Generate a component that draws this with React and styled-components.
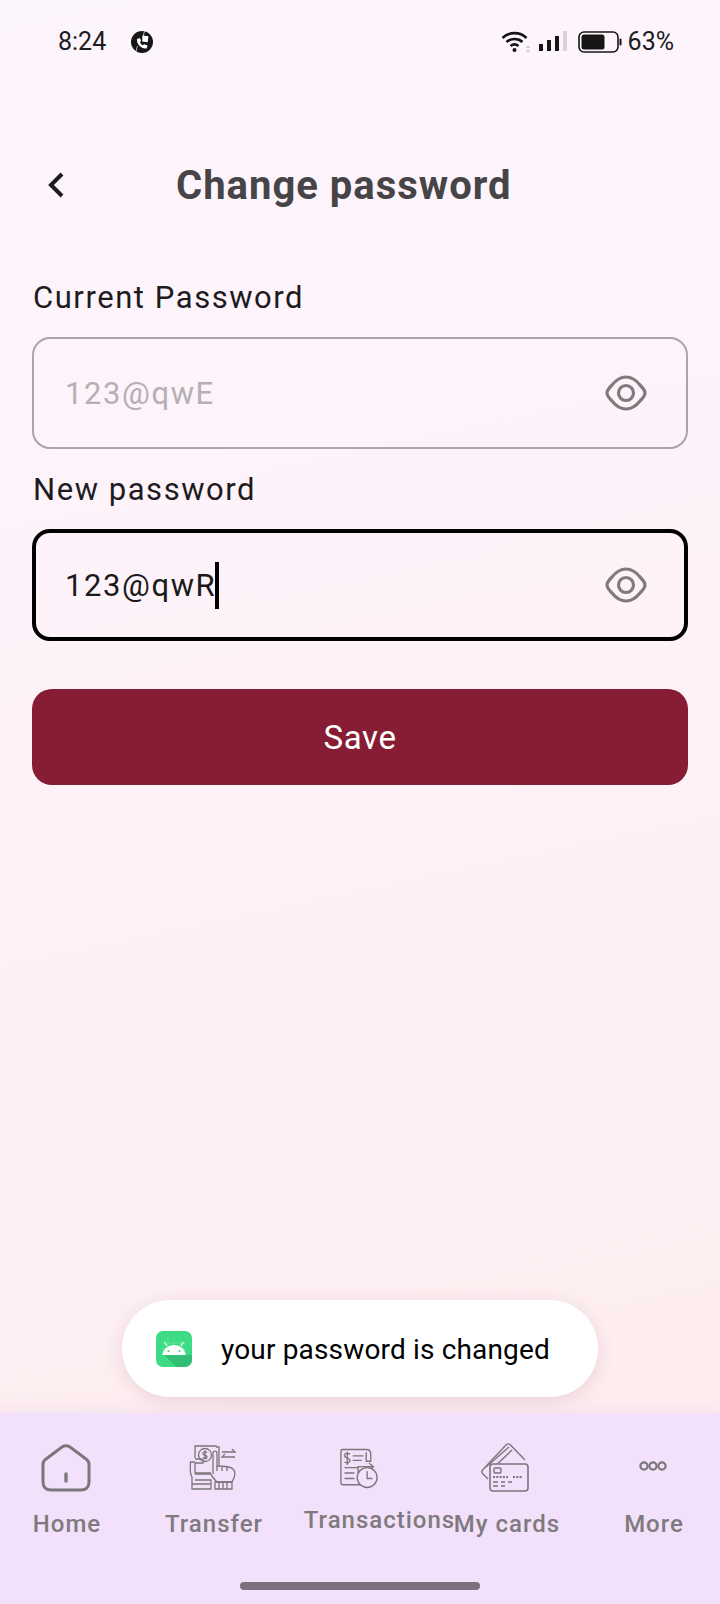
import React from 'react';
import styled, { createGlobalStyle } from 'styled-components';

const GlobalStyle = createGlobalStyle`
	html, body {
		margin: 0;
		padding: 0;
		background: #fdf2f6;
	}
	* {
		box-sizing: border-box;
	}
`;

const Screen = styled.div`
	position: relative;
	display: flex;
	flex-direction: column;
	width: 720px;
	height: 1604px;
	overflow: hidden;
	font-family: Roboto, 'Liberation Sans', sans-serif;
	background: linear-gradient(168deg, #fdf5fd 0%, #fef2f8 45%, #fdeced 100%);
`;

const StatusBar = styled.div`
	display: flex;
	align-items: center;
	justify-content: space-between;
	height: 83px;
	padding: 0 46px 0 58px;
	color: #1c1b1f;
	font-size: 25px;
	flex-shrink: 0;
`;

const StatusGroup = styled.div`
	display: flex;
	align-items: center;
	gap: ${(props) => props.gap || 0}px;
	margin-left: ${(props) => props.offset || 0}px;
`;

const Header = styled.div`
	display: flex;
	align-items: center;
	height: 70px;
	margin-top: 67px;
	padding-left: 46px;
`;

const Title = styled.h1`
	margin: 0 0 0 110px;
	color: #464446;
	font-size: 40px;
	font-weight: 700;
	letter-spacing: 1px;
`;

const Form = styled.div`
	display: flex;
	flex-direction: column;
	padding: 0 32px;
	margin-top: 60px;
`;

const Label = styled.label`
	display: block;
	height: 34px;
	line-height: 34px;
	padding-top: 1px;
	margin: ${(props) => (props.second ? '23px' : '0')} 0 23px 1px;
	color: #1d1b20;
	font-size: 31px;
	letter-spacing: 1.55px;
`;

const Field = styled.div`
	display: flex;
	align-items: center;
	justify-content: space-between;
	height: 112px;
	padding: 0 ${(props) => (props.focused ? '37px' : '39px')} 0 ${(props) => (props.focused ? '29px' : '31px')};
	border: ${(props) => (props.focused ? '4px solid #000' : '2px solid #aca4a8')};
	border-radius: 18px;
`;

const FieldText = styled.span`
	display: flex;
	align-items: center;
	color: ${(props) => (props.muted ? '#b5b0b2' : '#1a1a1a')};
	font-size: 31px;
	letter-spacing: 1.6px;
`;

const Caret = styled.span`
	display: inline-block;
	width: 4px;
	height: 47px;
	margin-left: -1px;
	background: #000;
`;

const SaveButton = styled.button`
	height: 96px;
	margin-top: 48px;
	border: none;
	border-radius: 20px;
	background: #861d34;
	color: #fff;
	font-family: inherit;
	font-size: 33px;
	letter-spacing: 0.6px;
`;

const Toast = styled.div`
	position: absolute;
	left: 122px;
	top: 1300px;
	display: flex;
	align-items: center;
	gap: 29px;
	width: 476px;
	height: 97px;
	padding-left: 34px;
	border-radius: 48px;
	background: #fff;
	box-shadow: 0 4px 18px rgba(120, 60, 80, 0.14);
	color: #000;
	font-size: 28px;
	letter-spacing: 0.16px;
	white-space: nowrap;
`;

const ToastText = styled.span`
	margin-top: 2px;
`;

const BottomNav = styled.nav`
	position: relative;
	display: grid;
	grid-template-columns: 132px 162px 130px 164px 130px;
	margin-top: auto;
	height: 191px;
	padding-top: 28px;
	background: #f3e0fb;
	box-shadow: 0 -6px 14px rgba(200, 170, 220, 0.12);
`;

const NavItem = styled.div`
	display: flex;
	flex-direction: column;
	align-items: center;
	color: #7f7a7d;
`;

const NavIcon = styled.div`
	display: flex;
	align-items: center;
	justify-content: center;
	height: 54px;
`;

const NavLabel = styled.span`
	margin-top: ${(props) => (props.raised ? '10px' : '14px')};
	margin-left: ${(props) => (props.raised ? '41px' : '2px')};
	font-size: 24px;
	font-weight: 500;
	letter-spacing: 1px;
	line-height: 30px;
	white-space: nowrap;
`;

const HomeBar = styled.div`
	position: absolute;
	left: 240px;
	bottom: 14px;
	width: 240px;
	height: 8px;
	border-radius: 4px;
	background: #7b6f7c;
`;

const BackIcon = () => (
	<svg width='20' height='28' viewBox='0 0 20 28' fill='none' stroke='#1d1b20' strokeWidth='4'>
		<polyline points='16 3 5 14 16 25' />
	</svg>
);

const AppStatusIcon = () => (
	<svg width='24' height='24' viewBox='0 0 24 24'>
		<circle cx='12' cy='12' r='11' fill='#161616' />
		<path d='M7 9 l3 -1 l1 3 l-1 1.200 c.6 1.400 1.400 2.400 2.800 3 l1.400 -1 l3.400 1.400 l-1 2.800 c-5 .8 -10.400 -4.400 -9.600 -9.400z' fill='#fff' />
		<path d='M12.500 5.500 l6 .8 l-.8 6 l-5.500 -.8z' fill='#fff' />
		<path d='M14.500 1 l-1.500 6 M7.500 16 l-2 7' stroke='#fff' strokeWidth='.7' />
	</svg>
);

const WifiIcon = () => (
	<svg width='30' height='24' viewBox='0 0 30 24' fill='none' stroke='#141414' strokeWidth='2.6'>
		<path d='M1.500 8 C8 1.500 19 1.500 25.500 8' />
		<path d='M5.500 12 C10 8 17 8 21.500 12' />
		<path d='M9.500 16 C12 14 15 14 17.500 16' />
		<circle cx='13.500' cy='20' r='2' fill='#141414' stroke='none' />
		<path d='M27 15 l2.600 3 h-5.200z M27 23 l2.600 -3 h-5.200z' fill='#d5d0d4' stroke='none' />
	</svg>
);

const SignalIcon = () => (
	<svg width='30' height='22' viewBox='0 0 30 22'>
		<rect x='1' y='13' width='4' height='7' fill='#161616' />
		<rect x='9' y='9' width='4' height='11' fill='#161616' />
		<rect x='17' y='5' width='4' height='15' fill='#161616' />
		<rect x='25' y='0' width='4' height='20' fill='#d8d3d8' />
	</svg>
);

const BatteryIcon = () => (
	<svg width='44' height='22' viewBox='0 0 44 22'>
		<rect x='1' y='1' width='39' height='20' rx='5' fill='none' stroke='#141414' strokeWidth='1.6' />
		<rect x='3.500' y='3.500' width='23' height='15' rx='2.500' fill='#161616' />
		<rect x='41.500' y='7.500' width='2' height='7' rx='1' fill='#141414' />
	</svg>
);

const EyeIcon = () => (
	<svg width='42' height='36' viewBox='0 0 42 36' fill='none' stroke='#82797c' strokeWidth='3.2'>
		<path d='M2 18 C2 16 4 13 7 10 C11 5 16 2 21 2 C26 2 31 5 35 10 C38 13 40 16 40 18 C40 20 38 23 35 26 C31 31 26 34 21 34 C16 34 11 31 7 26 C4 23 2 20 2 18z' />
		<circle cx='21' cy='18' r='7.500' />
	</svg>
);

const AndroidIcon = () => (
	<svg width='36' height='36' viewBox='0 0 36 36'>
		<rect width='36' height='36' rx='7' fill='#3ddc84' />
		<path d='M6 12 H30 M6 18 H30 M6 24 H30 M12 6 V30 M18 6 V30 M24 6 V30' stroke='#6fe6a6' strokeWidth='.6' />
		<path d='M8 24 L20 36 H29 a7 7 0 0 0 7 -7 V24z' fill='#27a866' opacity='.55' />
		<path d='M6.500 24 a11.500 10 0 0 1 23 0z' fill='#fff' />
		<path d='M11 15 l-2.500 -4 M25 15 l2.500 -4' stroke='#fff' strokeWidth='1.200' />
		<circle cx='12.500' cy='20' r='1.100' fill='#3ddc84' />
		<circle cx='23.500' cy='20' r='1.100' fill='#3ddc84' />
	</svg>
);

const HomeIcon = () => (
	<svg width='50' height='48' viewBox='0 0 50 48' fill='none' stroke='#7b7679' strokeWidth='3'>
		<path d='M2 20 C2 18 3 16.500 5 15 L21 3 C23.500 1.500 26.500 1.500 29 3 L45 15 C47 16.500 48 18 48 20 V38 C48 43 45 46 40 46 H10 C5 46 2 43 2 38z' />
		<path d='M25 30 V37' strokeLinecap='round' strokeWidth='3.400' />
	</svg>
);

const TransferIcon = () => (
	<svg width='48' height='48' viewBox='0 0 48 48' fill='none' stroke='#7b7679' strokeWidth='1.300'>
		<path d='M6 14 V2 H27 V3 M27 3 H30 V22' />
		<circle cx='16' cy='11' r='6.500' />
		<path d='M18 8.500 C16 7 13.800 8 14 10 C14.500 11.500 18 11 18 13 C18 14.800 15.500 15 14 13.500 M16 6.500 V15.500' />
		<path d='M33 8 H46 L43 5 M46 13 H33 L36 10' />
		<path d='M6 15 H12 C14 15 15 17 14 19 H6 V29 H22' />
		<path d='M6 18 H1.500 C1 24 1 30 3 33 V45 H22 V36 H6' />
		<path d='M6 30 H22 M3 40 H22' />
		<path d='M24 30 V9 C24 6.500 28 6.500 28 9 V22 C33 22 41 22 44 25 C47 28 46 33 43 38 H28 C26 36 23 33 22 30' fill='#f3e0fb' />
		<path d='M33 22 V27 M38 22.500 V27 M28 22 V27' />
		<path d='M26 38 H43 V45 H26z M30 38 V45 M34 38 V45 M38 38 V45' />
	</svg>
);

const TransactionsIcon = () => (
	<svg width='38' height='41' viewBox='0 0 42 44' fill='none' stroke='#7b7679' strokeWidth='1.500'>
		<path d='M24 40 H3 C2 40 1 39 1 38 V3 C1 2 2 1 3 1 H29 C32 1 34 3 34 6 V14 H29 V4' />
		<path d='M11 6 C8 4.500 5 5 5 8 C5 11 11 10 11 13 C11 16 8 16.500 5 15 M8 3.500 V18' />
		<path d='M14 8 H26 M14 13 H24 M5 21 H20 M5 27 H16 M5 33 H16' />
		<path d='M20 27 V20 H36 M32 16 L37 20 L32 24' />
		<circle cx='30' cy='32' r='11' fill='#f3e0fb' />
		<path d='M30 25 V33 H36' />
	</svg>
);

const CardsIcon = () => (
	<svg width='50' height='50' viewBox='0 0 50 50' fill='none' stroke='#7b7679' strokeWidth='1.400'>
		<path d='M7 36 L2 31 C0.500 29.500 0.500 28 2 26.500 L25 2 C26.500 0.500 28 0.500 29.500 2 L44 17' />
		<path d='M5 24 L28 4 M9 28 L31 7' />
		<rect x='9' y='21' width='38' height='27' rx='3' strokeWidth='1.600' fill='#f3e0fb' />
		<rect x='13' y='25' width='7' height='5' rx='1' />
		<path d='M12 34 H27 M32 34 H42' strokeDasharray='2 1.300' strokeWidth='1.800' />
		<path d='M12 39 H17 M20 39 H24 M27 39 H31 M12 43 H17 M20 43 H24' />
	</svg>
);

const MoreIcon = () => (
	<svg width='28' height='16' viewBox='0 0 28 16' fill='none' stroke='#7b7679' strokeWidth='2.200'>
		<circle cx='5' cy='6' r='3.600' />
		<circle cx='14' cy='6' r='3.600' />
		<circle cx='23' cy='6' r='3.600' />
	</svg>
);

const navItems = [
	{ label: 'Home', Icon: HomeIcon },
	{ label: 'Transfer', Icon: TransferIcon },
	{ label: 'Transactions', Icon: TransactionsIcon, raised: true },
	{ label: 'My cards', Icon: CardsIcon },
	{ label: 'More', Icon: MoreIcon },
];

export default function App() {
	return (
		<Screen>
			<GlobalStyle />
			<StatusBar>
				<StatusGroup gap={24}>
					<span>8:24</span>
					<AppStatusIcon />
				</StatusGroup>
				<StatusGroup gap={7}>
					<WifiIcon />
					<SignalIcon />
					<StatusGroup gap={6} offset={3}>
						<BatteryIcon />
						<span>63%</span>
					</StatusGroup>
				</StatusGroup>
			</StatusBar>
			<Header>
				<BackIcon />
				<Title>Change password</Title>
			</Header>
			<Form>
				<Label>Current Password</Label>
				<Field>
					<FieldText muted>123@qwE</FieldText>
					<EyeIcon />
				</Field>
				<Label second>New password</Label>
				<Field focused>
					<FieldText>
						123@qwR
						<Caret />
					</FieldText>
					<EyeIcon />
				</Field>
				<SaveButton>Save</SaveButton>
			</Form>
			<Toast>
				<AndroidIcon />
				<ToastText>your password is changed</ToastText>
			</Toast>
			<BottomNav>
				{navItems.map(({ label, Icon, raised }) => (
					<NavItem key={label}>
						<NavIcon>
							<Icon />
						</NavIcon>
						<NavLabel raised={raised}>{label}</NavLabel>
					</NavItem>
				))}
				<HomeBar />
			</BottomNav>
		</Screen>
	);
}
